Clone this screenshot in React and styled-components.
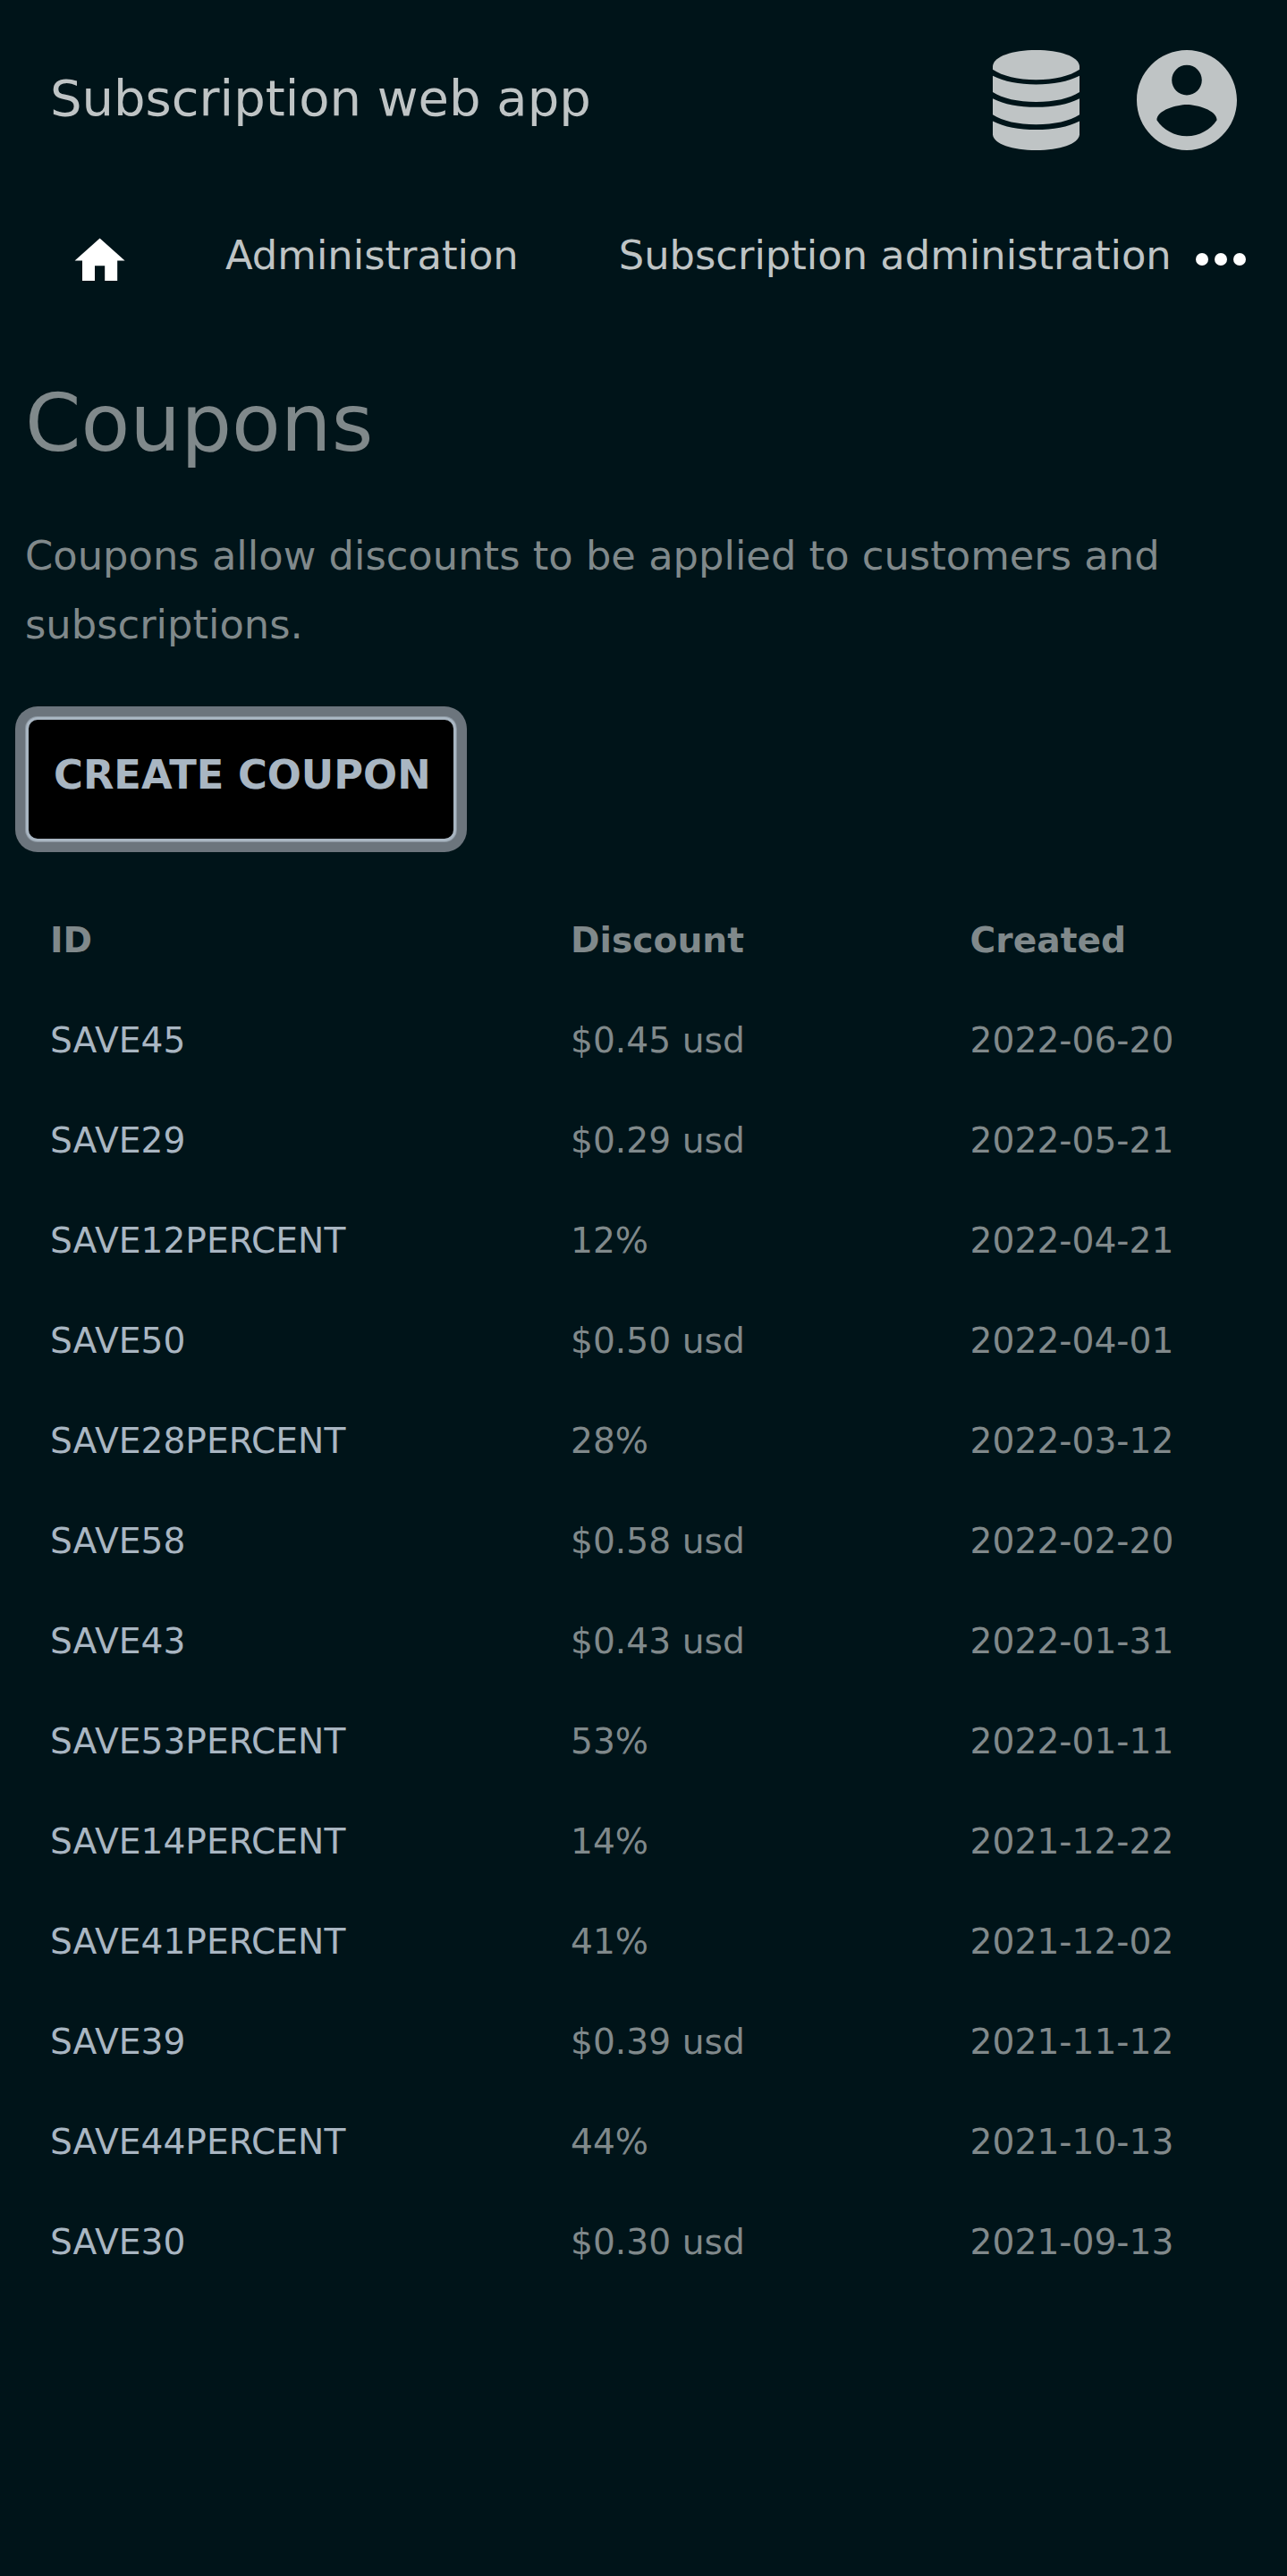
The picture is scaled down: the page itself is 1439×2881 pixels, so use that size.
import React from "react";
import styled, { createGlobalStyle } from "styled-components";

const GlobalStyle = createGlobalStyle`
  * { box-sizing: border-box; }
  html, body { margin: 0; background: #001419; }
  body { font-family: "DejaVu Sans", sans-serif; color: #80898b; }
`;

const Page = styled.div`
  display: flex;
  flex-direction: column;
  width: 1439px;
  min-height: 2881px;
  background: #001419;
`;

const Header = styled.header`
  display: flex;
  align-items: center;
  justify-content: space-between;
  height: 224px;
  padding: 0 56.4px 0 56px;
`;

const Brand = styled.div`
  font-size: 56px;
  line-height: 66px;
  margin-bottom: 4px;
  color: #bfc4c5;
`;

const HeaderIcons = styled.div`
  display: flex;
  align-items: center;
  gap: 63.6px;
  color: #bfc4c5;
`;

const Icon = styled.svg`
  display: block;
  flex: none;
  width: ${(p) => p.$w}px;
  height: ${(p) => p.$h}px;
  fill: currentColor;
`;

const Nav = styled.nav`
  display: flex;
  align-items: flex-start;
  height: 168px;
  padding: 24px 32px 0 28px;
`;

const HomeLink = styled.a`
  display: flex;
  padding: 10.4px 50.4px 0;
  color: #fff;
`;

const NavLink = styled.a`
  padding: 8px ${(p) => (p.$last ? 0 : 56)}px 0 56px;
  font-size: 44.8px;
  line-height: 60px;
  white-space: nowrap;
  color: #bfc4c5;
`;

const MoreButton = styled.a`
  display: flex;
  margin-left: auto;
  color: #fff;
`;

const Content = styled.main`
  display: flex;
  flex-direction: column;
  align-items: flex-start;
  padding: 0 28px;
`;

const Title = styled.h1`
  margin: 28px 0 0;
  font-size: 89.6px;
  line-height: 107px;
  font-weight: 400;
`;

const Lead = styled.p`
  margin: 56px 0 0;
  font-size: 44.8px;
  line-height: 77px;
`;

const CreateButton = styled.a`
  margin: 65px 0 0 1px;
  height: 139px;
  width: 481px;
  padding: 25px 28px 0;
  border: 3px solid #a9b6c2;
  border-radius: 13px;
  background: #000;
  box-shadow: 0 0 0 1px #8b96a0, 0 0 0 12px #6c757d;
  color: #a9b6c2;
  font-size: 44.8px;
  line-height: 73px;
  font-weight: 700;
  white-space: nowrap;
`;

const Table = styled.div`
  display: grid;
  grid-template-columns: 582px 446.6px 1fr;
  grid-auto-rows: 112px;
  align-self: stretch;
  margin-top: 55px;
  padding-left: 28px;
  font-size: 39.2px;
  line-height: 112px;
`;

const HeadCell = styled.div`
  font-weight: 700;
`;

const Cell = styled.div`
  color: ${(p) => (p.$link ? "#a9b6c2" : "#80898b")};
`;

const coupons = [
  ["SAVE45", "$0.45 usd", "2022-06-20"],
  ["SAVE29", "$0.29 usd", "2022-05-21"],
  ["SAVE12PERCENT", "12%", "2022-04-21"],
  ["SAVE50", "$0.50 usd", "2022-04-01"],
  ["SAVE28PERCENT", "28%", "2022-03-12"],
  ["SAVE58", "$0.58 usd", "2022-02-20"],
  ["SAVE43", "$0.43 usd", "2022-01-31"],
  ["SAVE53PERCENT", "53%", "2022-01-11"],
  ["SAVE14PERCENT", "14%", "2021-12-22"],
  ["SAVE41PERCENT", "41%", "2021-12-02"],
  ["SAVE39", "$0.39 usd", "2021-11-12"],
  ["SAVE44PERCENT", "44%", "2021-10-13"],
  ["SAVE30", "$0.30 usd", "2021-09-13"],
];

const DatabaseIcon = () => (
  <Icon $w={97} $h={112} viewBox="0 0 97 112">
    <path d="M0 18C1 7 22 0 48.5 0S96 7 97 18V21.7C86 29 69 33.2 48.5 33.2S11 29 0 21.7Z" />
    <path d="M0 28.800C13 35.300 29 38.400 48.500 38.400S84 35.300 97 28.800V47C86 54 69 58 48.500 58S11 54 0 47Z" />
    <path d="M0 54.200C13 60.700 29 63.800 48.500 63.800S84 60.700 97 54.200V72.200C86 79.200 69 83.200 48.500 83.200S11 79.200 0 72.200Z" />
    <path d="M0 79.400C13 85.900 29 89 48.500 89S84 85.900 97 79.400V94.500C96 105 75 112 48.500 112S1 105 0 94.500Z" />
  </Icon>
);

const AccountIcon = () => (
  <Icon $w={112} $h={112} viewBox="2 2 20 20">
    <path d="M12 2C6.480 2 2 6.480 2 12s4.480 10 10 10 10-4.480 10-10S17.520 2 12 2zm0 3c1.660 0 3 1.340 3 3s-1.340 3-3 3-3-1.340-3-3 1.340-3 3-3zm0 14.200c-2.500 0-4.710-1.280-6-3.220.030-1.990 4-3.080 6-3.080 1.990 0 5.970 1.090 6 3.080-1.290 1.940-3.500 3.220-6 3.220z" />
  </Icon>
);

const HomeIcon = () => (
  <Icon $w={67.2} $h={67.2} viewBox="0 0 24 24">
    <path d="M10 20v-6h4v6h5v-8h3L12 3 2 12h3v8z" />
  </Icon>
);

const MoreIcon = () => (
  <Icon $w={84} $h={84} viewBox="0 0 24 24">
    <circle cx="6" cy="12" r="2" />
    <circle cx="12" cy="12" r="2" />
    <circle cx="18" cy="12" r="2" />
  </Icon>
);

export default function App() {
  return (
    <>
      <GlobalStyle />
      <Page>
        <Header>
          <Brand>Subscription web app</Brand>
          <HeaderIcons>
            <DatabaseIcon />
            <AccountIcon />
          </HeaderIcons>
        </Header>
        <Nav>
          <HomeLink>
            <HomeIcon />
          </HomeLink>
          <NavLink>Administration</NavLink>
          <NavLink $last>Subscription administration</NavLink>
          <MoreButton>
            <MoreIcon />
          </MoreButton>
        </Nav>
        <Content>
          <Title>Coupons</Title>
          <Lead>
            Coupons allow discounts to be applied to customers and subscriptions.
          </Lead>
          <CreateButton>CREATE COUPON</CreateButton>
          <Table>
            <HeadCell>ID</HeadCell>
            <HeadCell>Discount</HeadCell>
            <HeadCell>Created</HeadCell>
            {coupons.map(([id, discount, created]) => (
              <React.Fragment key={id}>
                <Cell $link>{id}</Cell>
                <Cell>{discount}</Cell>
                <Cell>{created}</Cell>
              </React.Fragment>
            ))}
          </Table>
        </Content>
      </Page>
    </>
  );
}
